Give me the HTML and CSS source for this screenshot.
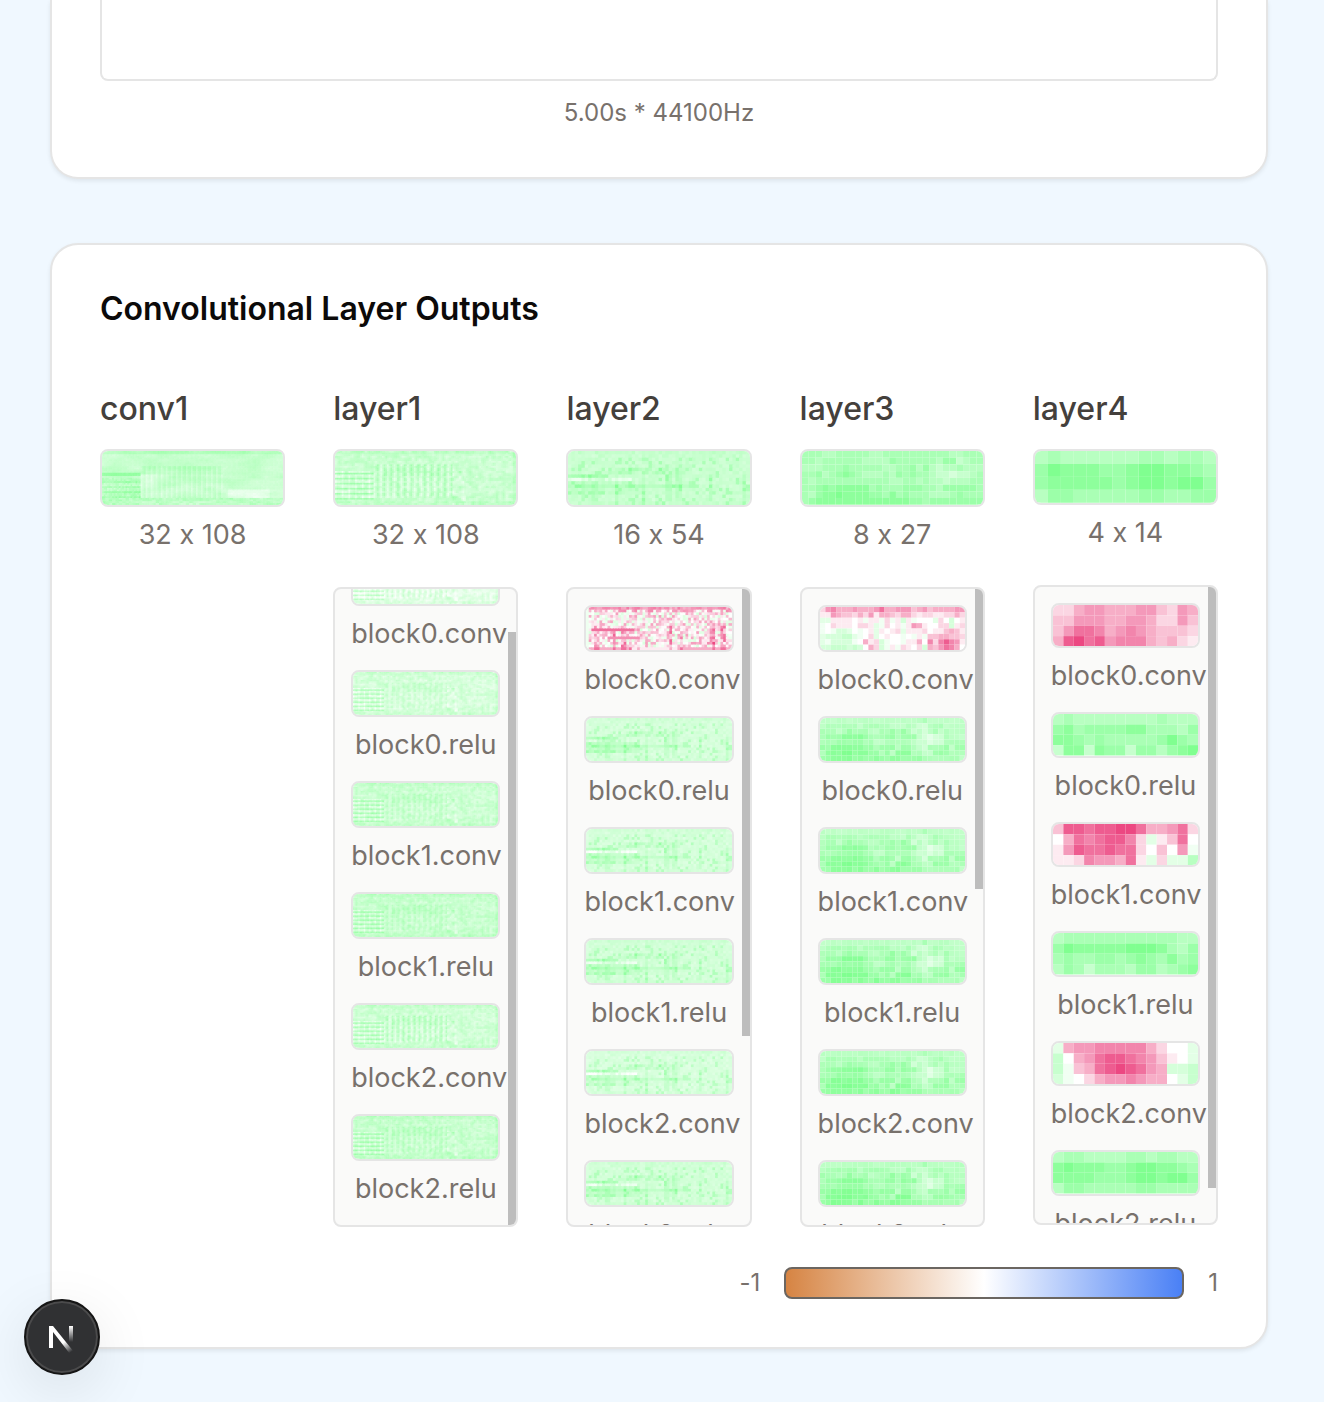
FILE: index.html
```html
<!DOCTYPE html>
<html lang="en">
<head>
<meta charset="utf-8">
<meta name="viewport" content="width=device-width, initial-scale=1">
<title>Convolutional Layer Outputs</title>
<link rel="stylesheet" href="styles.css">
</head>
<body>
<main class="page">
  <section class="card card-waveform">
    <div class="waveform"></div>
    <p class="waveform-caption">5.00s * 44100Hz</p>
  </section>

  <section class="card card-layers">
    <h2 class="card-title">Convolutional Layer Outputs</h2>
    <div class="layers" id="layers"></div>
    <div class="legend">
      <span>-1</span>
      <div class="legend-bar"></div>
      <span>1</span>
    </div>
  </section>
</main>

<button class="dev-badge" type="button" aria-label="Open developer tools">
  <svg width="44" height="44" viewBox="0 0 44 44" fill="none" aria-hidden="true">
    <defs>
      <linearGradient id="diag" x1="27" y1="25" x2="34" y2="35" gradientUnits="userSpaceOnUse">
        <stop stop-color="#fff"/><stop offset="1" stop-color="#fff" stop-opacity="0"/>
      </linearGradient>
      <linearGradient id="stem" x1="31" y1="11" x2="31" y2="27" gradientUnits="userSpaceOnUse">
        <stop stop-color="#fff"/><stop offset="1" stop-color="#fff" stop-opacity="0"/>
      </linearGradient>
    </defs>
    <path d="M9 33V11h4l21 26-4 2L13 17v16z" fill="url(#diag)"/>
    <path d="M29 11h4v16h-4z" fill="url(#stem)"/>
  </svg>
</button>
<script src="layers.js"></script>
</body>
</html>
```
FILE: styles.css
```css
* {
  box-sizing: border-box;
}

body {
  margin: 0;
  background: #f0f8ff;
  color: #0c0a09;
  font-family: Inter, "Liberation Sans", sans-serif;
  font-variant-ligatures: no-contextual;
}

h2, h3, p, figure {
  margin: 0;
}

.page {
  display: flex;
  flex-direction: column;
  gap: 64px;
  padding: 0 56px 52px 50px;
}

.card {
  padding: 48px;
  background: #fff;
  border: 2px solid #e5e5e5;
  border-radius: 28px;
  box-shadow: 0 2px 4px rgba(0, 0, 0, 0.08);
}

.card-waveform {
  padding-top: 0;
  border-top: 0;
  border-top-left-radius: 0;
  border-top-right-radius: 0;
}

.waveform {
  height: 81px;
  border: 2px solid #e5e5e5;
  border-top: 0;
  border-radius: 0 0 8px 8px;
}

.waveform-caption {
  margin-top: 16px;
  color: #78716c;
  font-size: 24px;
  line-height: 32px;
  text-align: center;
}

.card-title {
  margin-bottom: 60px;
  font-size: 32px;
  font-weight: 600;
  line-height: 32px;
}

.layers {
  display: grid;
  grid-template-columns: repeat(5, minmax(0, 1fr));
  align-items: start;
  gap: 48px;
}

.layer-name {
  margin-bottom: 16px;
  color: #44403c;
  font-size: 32px;
  font-weight: 500;
  line-height: 48px;
}

.map {
  display: flex;
  flex-direction: column;
  align-items: center;
}

.map svg {
  display: block;
  width: 100%;
  background: #fff;
  border: 2px solid #e5e5e5;
  border-radius: 8px;
}

.map figcaption {
  margin-top: 8px;
  color: #78716c;
  font-size: 27px;
  line-height: 40px;
  white-space: nowrap;
}

.panel {
  position: relative;
  margin-top: 32px;
  overflow: hidden;
  background: #fafaf9;
  border: 2px solid #e5e5e5;
  border-radius: 8px;
}

.panel-list {
  display: flex;
  flex-direction: column;
  gap: 16px;
  height: 636px;
  padding: 16px;
  overflow: hidden auto;
  scrollbar-width: none;
}

.panel-list .map {
  flex: none;
}

.panel-list figcaption {
  align-self: flex-start;
  min-width: 100%;
  text-align: center;
}

.panel-thumb {
  position: absolute;
  top: 0;
  right: 0;
  width: 8px;
  background: #bdbdbd;
}

.legend {
  display: flex;
  align-items: center;
  justify-content: flex-end;
  gap: 24px;
  margin-top: 40px;
  color: #78716c;
  font-size: 24px;
  line-height: 32px;
}

.legend-bar {
  width: 400px;
  height: 32px;
  border: 2px solid #6b6661;
  border-radius: 8px;
  background: linear-gradient(to right, #d68443, #fff, #4a80f5);
}

.dev-badge {
  position: fixed;
  bottom: 27px;
  left: 24px;
  display: grid;
  place-items: center;
  width: 76px;
  height: 76px;
  padding: 0;
  background: #303133;
  border: 2px solid #151515;
  border-radius: 50%;
  box-shadow: inset 0 0 0 2px #4b4b4c, 0 16px 60px rgba(0, 0, 0, 0.1);
}
```
FILE: layers.js
```js
// Cell codes: 0-9 run from white to full green, a-i from pale to full pink.
const GREEN = [128, 255, 144];
const PINK = [236, 72, 130];

function decode(code) {
  return code >= "a" ? -(code.charCodeAt(0) - 96) : Number(code);
}

function color(value) {
  const end = value < 0 ? PINK : GREEN;
  const t = Math.min(Math.abs(value) / 9, 1);
  return "rgb(" + end.map((c) => Math.round(255 + (c - 255) * t)).join() + ")";
}

function heatmap(rows) {
  // Cells of dense maps overlap a little, so that no seams show between them.
  const side = rows[0].length > 50 ? 1.3 : 1;
  let cells = "";
  rows.forEach((row, y) => row.forEach((v, x) => {
    cells += `<rect x="${x}" y="${y}" width="${side}" height="${side}" fill="${color(v)}"/>`;
  }));
  return `<svg viewBox="0 0 ${rows[0].length} ${rows.length}" aria-hidden="true">${cells}</svg>`;
}

const grid = (text) => text.trim().split(/\s+/).map((row) => [...row].map(decode));

// Repeatable noise in -1..1.
function noise(x, y, seed) {
  const n = Math.sin(x * 127.1 + y * 311.7 + seed * 74.7) * 43758.5453;
  return (n - Math.floor(n)) * 2 - 1;
}

function smooth(x, y, seed) {
  const x0 = Math.floor(x), y0 = Math.floor(y), fx = x - x0, fy = y - y0;
  const top = noise(x0, y0, seed) * (1 - fx) + noise(x0 + 1, y0, seed) * fx;
  const low = noise(x0, y0 + 1, seed) * (1 - fx) + noise(x0 + 1, y0 + 1, seed) * fx;
  return top * (1 - fy) + low * fy;
}

function build(cols, rows, cell) {
  return Array.from({ length: rows }, (_, y) => Array.from({ length: cols }, (_, x) => cell(x, y)));
}

// Smooth spectrogram of the first convolution.
const first = () => build(108, 32, (x, y) => {
  let v = 4 + smooth(x / 7, y / 2.5, 3) + noise(x, y, 5) * 0.3;
  if (y < 2) v += 1.6;
  if (y > 27) v += 1 + noise(x >> 1, y, 6);
  if (x < 23) {
    if (y === 13 || y === 14) v += 3;
    else if (y > 15 && y < 28) v += (y % 3 ? 0.8 : 2.4) + noise(x, y, 8);
  } else if (x < 72 && y > 8 && y < 28) {
    v += Math.sin(x * 2.1) * 0.8;
    if (y < 14) v += 1;
    else if (x < 32) v -= 1;
  } else if (y > 22 && y < 28) {
    v -= x > 74 && x < 100 ? 1.8 : 0.4;
  }
  return Math.max(v, 0.5);
});

// Fine maps: harmonics on the left, pulses in the middle, texture on the right.
const fine = (seed, base, pulse) => build(108, 32, (x, y) => {
  let v = base + smooth(x / 2, y / 1.5, 11) * 1.4 + noise(x, y, seed) * 0.3;
  if (y < 2 || y > 29) v += 0.8;
  if (x > 105) v += 1;
  if (x < 23 && y > 11 && y < 29) {
    if (y === 13) v += 3;
    else v += (y % 3 === 1 ? 2.2 : -0.8) + (x % 4 === 0 ? -0.9 : 0.3);
  } else if (x > 22 && x < 70 && y > 7 && y < 28) {
    v += Math.sin(x * 1.57) * pulse * (y % 3 ? 1 : 0.5) + (y < 15 ? 0.8 : 0);
  } else if (x > 69 && x < 78 && y > 10) {
    v += smooth(x / 2, y / 1.5, 21) * 2;
  }
  return Math.max(v, 0.3);
});

const medium = (seed, base, gap, fill) => build(54, 16, (x, y) => {
  const spot = noise(x, y, 31);
  let v = base + spot * 0.6 + noise(x, y, seed) * 0.3;
  if (spot > 0.75 && y > 1) v += 1.6;
  if (noise(x, 0, 33) > 0.55 && y > 6 && y < 15) v += 1.2;
  if (y === 0 || y === 15) v += 0.3;
  if ((y === 5 || y === 6) && x > 11 && x < 35) v += 1.4 + spot;
  if (y === 7 && x < 12) v += 2.2;
  if (y === 8 && x < 20) v -= gap;
  if (y > 8 && y < 13 && x < 20) v += fill + (y === 10 ? 1 : 0);
  if (y === 10 && x > 19 && x < 36) v += 1.4;
  return Math.max(v, 0.1);
});

const mixed = () => build(54, 16, (x, y) => {
  let v = -1 + noise(x, y, 41) * 3.8;
  if (y === 0) v = -5 - noise(x, y, 42) * 1.5;
  if (y === 1) v -= 1.2;
  if (y === 15) v = x < 17 || x > 33 ? -4 : -1;
  if (noise(x, 0, 44) > 0.5 && y > 6) v -= 3;
  if (y === 8 && x > 1 && x < 18) v = -7;
  if (y === 11 && x > 7 && x < 20) v = -5.5;
  if (x < 1) v = 1.2;
  if (x > 44 && x < 48 && y > 7 && y < 14) v -= 3;
  return v;
});

const coarse = `
  555555555555555555565555555
  566666656666655565445665555
  666567666556676764545656555
  677788887666776777543446555
  666777776655666665443446666
  778888887767775776546667577
  688899888776758886655777666
  778888787787788777766666665`;

// Shifts a coarse map's cells by a small repeatable amount.
const vary = (text, seed, shift) => grid(text).map((row, y) => row.map((v, x) =>
  Math.max((v - 6) * 1.15 + 5.7 + shift + noise(x, y, seed) * 0.4, 0.5)));

const layer3Main = grid(`
  666556666655666666666655666
  665666666555576666665774566
  555666766666556675754556555
  667567876555657676654434456
  656666666666655665655455566
  667878888867666777665777776
  657889888877686766655567666
  678888888888888877677777777`);

const layer3Conv = grid(`
  befdddedddegddeeecdecddddee
  aaedccbdbeaddcbddbabbaabbdb
  22aaaa0a1aa1b1a3a10002b030a
  10baaa0bba21b0a1aeda00bb3ab
  101332010a2a0ab2aaab0aacdca
  233344210b20a00101a1ccddccb
  21333310dab31001aad0fbfhfea
  334443430db31a1ba0b3dcegfd0`);

const layers = [
  { name: "conv1", size: "32 x 108", main: first(), maps: [] },
  { name: "layer1", size: "32 x 108", main: fine(1, 3.8, 1.8), scrolled: true, maps: [
    fine(2, 2, 1.4), fine(3, 3, 0.7), fine(4, 3.7, 0.9),
    fine(5, 4, 0.8), fine(6, 3.5, 1.7), fine(7, 4, 1)],
  },
  { name: "layer2", size: "16 x 54", main: medium(1, 3.8, 2, 0.6), maps: [
    mixed(), medium(2, 3, 0.2, 1.5), medium(3, 3, 2.4, 1), medium(4, 3.2, 1.8, 1.2),
    medium(5, 2.8, 2.4, 0.8), medium(6, 3.2, 1.8, 1.2), medium(7, 3, 2, 1), medium(8, 3.4, 2, 1)],
  },
  { name: "layer3", size: "8 x 27", main: layer3Main, maps: [
    layer3Conv, vary(coarse, 1, 0), vary(coarse, 2, 0), vary(coarse, 3, 0.2), vary(coarse, 4, 0.2),
    vary(coarse, 5, 0.4), vary(coarse, 6, 0), vary(coarse, 7, 0), vary(coarse, 8, 0),
    vary(coarse, 9, 0), vary(coarse, 10, 0), vary(coarse, 11, 0)],
  },
  { name: "layer4", size: "4 x 14", main: grid("56555555665665 79888778998876 78888878998997 57766666776677"), maps: [
    grid("bbdeedddeecbed cceeeddeedbbec ceggfdefedcccb dhighefffdcdba"),
    grid("56555555556555 78677778866657 88767666667976 48848774775789"),
    grid("chhghhiigddegb 0dgfghhfb2acg0 aehgghggb0c0e1 aabfeedga2b225"),
    grid("56666666666655 79888889998657 67667767876867 57646665775678"),
    grid("2deefffffdb002 40deghhgfeca02 41cdghihgedcd4 310bdeefedd024".replace("cd4", "334")),
    grid("56655556656655 89888778998876 88887778998997 57766666776666")],
  },
];

function figure(map, label) {
  return `<figure class="map">${heatmap(map)}<figcaption>${label}</figcaption></figure>`;
}

function panel(layer) {
  if (!layer.maps.length) return "";
  const items = layer.maps.map((map, i) =>
    figure(map, `block${i >> 1}.${i % 2 ? "relu" : "conv"}`)).join("");
  return `<div class="panel"><div class="panel-list">${items}</div><div class="panel-thumb"></div></div>`;
}

document.getElementById("layers").innerHTML = layers.map((layer) =>
  `<section class="layer"><h3 class="layer-name">${layer.name}</h3>` +
  figure(layer.main, layer.size) + panel(layer) + "</section>").join("");

function placeThumb(list) {
  const thumb = list.nextElementSibling;
  const ratio = list.clientHeight / list.scrollHeight;
  thumb.style.height = list.clientHeight * ratio + "px";
  thumb.style.top = list.scrollTop * ratio + "px";
}

document.querySelectorAll(".layer").forEach((section, i) => {
  const list = section.querySelector(".panel-list");
  if (!list) return;
  if (layers[i].scrolled) list.scrollTop = list.scrollHeight;
  list.addEventListener("scroll", () => placeThumb(list));
  placeThumb(list);
});
```
